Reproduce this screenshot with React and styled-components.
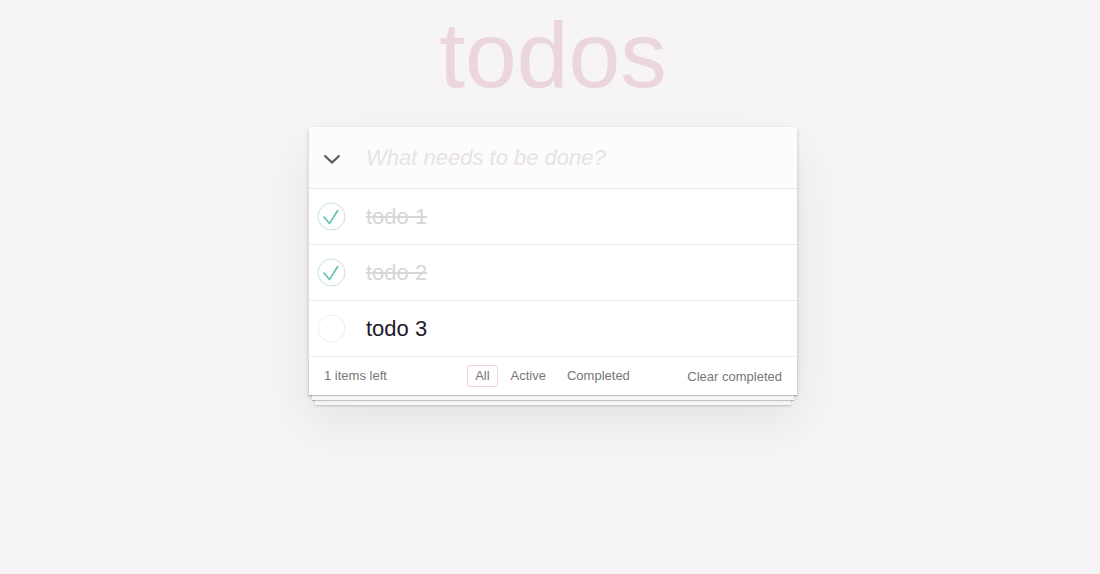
import styled, { createGlobalStyle } from "styled-components";

const GlobalStyle = createGlobalStyle`
  html, body {
    margin: 0;
    padding: 0;
  }
  body {
    background: #f6f4f7;
    font-family: "Liberation Sans", Arial, sans-serif;
    color: #4d4d4d;
  }
`;

const Page = styled.div`
  display: flex;
  flex-direction: column;
  align-items: center;
  min-height: 574px;
`;

const Title = styled.h1`
  margin: 0;
  padding-top: 9px;
  height: 92px;
  font-size: 93px;
  line-height: 92px;
  font-weight: 100;
  color: #ebd6db;
  text-align: center;
  margin-left: 6px;
`;

const Card = styled.section`
  width: 488px;
  margin-top: 26px;
  margin-left: 6px;
  background: #fff;
  box-shadow: 0 2px 4px rgba(0, 0, 0, 0.18), 0 25px 50px rgba(0, 0, 0, 0.08);
`;

const Header = styled.header`
  display: flex;
  align-items: center;
  height: 61px;
  background: #fdfbfd;
  border-bottom: 1px solid #e8e5ea;
`;

const ToggleAll = styled.div`
  width: 57px;
  display: flex;
  justify-content: center;
  padding-right: 11px;
  padding-top: 3px;
  box-sizing: border-box;
`;

const NewTodo = styled.div`
  font-size: 22px;
  font-style: italic;
  color: #e6e3e6;
`;

const List = styled.ul`
  list-style: none;
  margin: 0;
  padding: 0;
`;

const Item = styled.li`
  display: flex;
  align-items: center;
  height: 55px;
  border-bottom: 1px solid #ededed;
`;

const CheckCell = styled.div`
  width: 57px;
  display: flex;
  padding-left: 8px;
  box-sizing: border-box;
`;

const Label = styled.span`
  font-size: 22px;
  color: ${(p) => (p.$done ? "#d9d6da" : "#1e1a2a")};
  text-decoration: ${(p) => (p.$done ? "line-through" : "none")};
`;

const Footer = styled.footer`
  display: grid;
  grid-template-columns: 1fr auto 1fr;
  align-items: center;
  height: 38px;
  padding: 0 15px;
  font-size: 13px;
  color: #777;
  box-shadow: 0 1px 1px rgba(0, 0, 0, 0.2), 0 8px 0 -3px #f6f6f6,
    0 9px 1px -3px rgba(0, 0, 0, 0.2), 0 16px 0 -6px #f6f6f6,
    0 17px 2px -6px rgba(0, 0, 0, 0.2);
`;

const Count = styled.span`
  justify-self: start;
  padding-bottom: 1px;
`;

const Filters = styled.div`
  display: flex;
  margin-left: -1px;
`;

const Filter = styled.span`
  margin: 3px 2.5px;
  padding: 3px 7px;
  line-height: 14px;
  border: 1px solid ${(p) => (p.$selected ? "#f2d2db" : "transparent")};
  border-radius: 3px;
`;

const Clear = styled.span`
  justify-self: end;
  padding-top: 1px;
`;

function Chevron() {
  return (
    <svg width="18" height="10" viewBox="0 0 18 10">
      <path d="M1.5 1.5 L9 8.5 L16.5 1.5" fill="none" stroke="#5a5a5a" strokeWidth="2.2" />
    </svg>
  );
}

function Check({ done }) {
  return (
    <svg width="29" height="29" viewBox="0 0 29 29">
      <circle cx="14.5" cy="14.5" r="13.5" fill="#fff" stroke={done ? "#c5e3dc" : "#efeeef"} strokeWidth="1" />
      {done && (
        <path d="M6.5 14.5 L12.5 21.5 L21 8" fill="none" stroke="#5dc2af" strokeWidth="1.6" />
      )}
    </svg>
  );
}

const todos = [
  { id: 1, title: "todo 1", done: true },
  { id: 2, title: "todo 2", done: true },
  { id: 3, title: "todo 3", done: false },
];

export default function App() {
  return (
    <>
      <GlobalStyle />
      <Page>
        <Title>todos</Title>
        <Card>
          <Header>
            <ToggleAll>
              <Chevron />
            </ToggleAll>
            <NewTodo>What needs to be done?</NewTodo>
          </Header>
          <List>
            {todos.map((t) => (
              <Item key={t.id}>
                <CheckCell>
                  <Check done={t.done} />
                </CheckCell>
                <Label $done={t.done}>{t.title}</Label>
              </Item>
            ))}
          </List>
          <Footer>
            <Count>1 items left</Count>
            <Filters>
              <Filter $selected>All</Filter>
              <Filter>Active</Filter>
              <Filter>Completed</Filter>
            </Filters>
            <Clear>Clear completed</Clear>
          </Footer>
        </Card>
      </Page>
    </>
  );
}
